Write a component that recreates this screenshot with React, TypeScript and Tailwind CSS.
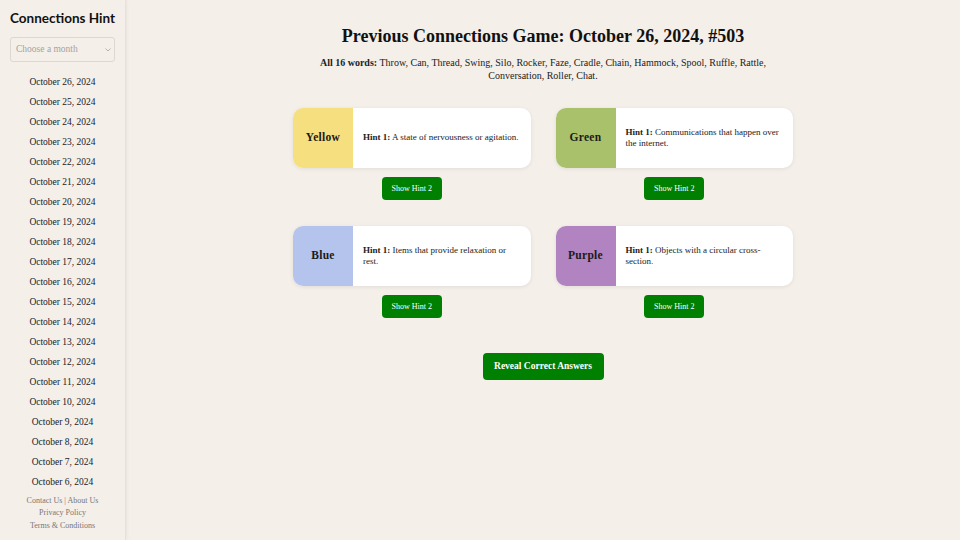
import React from 'react';

const dates = [
  'October 26, 2024', 'October 25, 2024', 'October 24, 2024', 'October 23, 2024',
  'October 22, 2024', 'October 21, 2024', 'October 20, 2024', 'October 19, 2024',
  'October 18, 2024', 'October 17, 2024', 'October 16, 2024', 'October 15, 2024',
  'October 14, 2024', 'October 13, 2024', 'October 12, 2024', 'October 11, 2024',
  'October 10, 2024', 'October 9, 2024', 'October 8, 2024', 'October 7, 2024',
  'October 6, 2024',
];

const groups = [
  { name: 'Yellow', bg: 'bg-[#f5df7e]', hint: 'A state of nervousness or agitation.' },
  { name: 'Green', bg: 'bg-[#a9c16a]', hint: 'Communications that happen over the internet.' },
  { name: 'Blue', bg: 'bg-[#b4c4ed]', hint: 'Items that provide relaxation or rest.' },
  { name: 'Purple', bg: 'bg-[#b183c1]', hint: 'Objects with a circular cross-section.' },
];

export default function App() {
  return (
    <div className="flex h-[540px] bg-[#f4efe9] text-[#1a1a1a] overflow-hidden" style={{ fontFamily: '"Liberation Serif", serif' }}>
      {/* Sidebar */}
      <aside className="w-[126px] shrink-0 border-r border-[#e6e1da] shadow-[1px_0_3px_rgba(0,0,0,0.05)] flex flex-col items-center px-[10px]">
        <h2 className="mt-[8px] whitespace-nowrap text-[13.5px] leading-[20px] font-bold text-[#111]" style={{ fontFamily: 'Lato, sans-serif' }}>
          Connections Hint
        </h2>
        <div className="mt-[9px] w-full h-[25px] shrink-0 border border-[#dcd7d0] rounded-[3px] bg-[#f4efe9] flex items-center justify-between pl-[5px] pr-[3px] text-[9.5px] text-[#a3a3a3]">
          <span>Choose a month</span>
          <svg width="6" height="4" viewBox="0 0 6 4" fill="none" stroke="#aaa" strokeWidth="0.9">
            <path d="M0.5 0.5 L3 3 L5.5 0.5" />
          </svg>
        </div>
        <ul className="mt-[12px] w-full flex flex-col items-center">
          {dates.map((d) => (
            <li key={d} className="h-[20px] leading-[16px] text-[9.5px] text-[#222] whitespace-nowrap">{d}</li>
          ))}
        </ul>
        <div className="mt-[1px] flex flex-col items-center text-[8px] leading-[12.3px] text-[#777] whitespace-nowrap">
          <span>Contact Us | About Us</span>
          <span>Privacy Policy</span>
          <span>Terms &amp; Conditions</span>
        </div>
      </aside>

      {/* Main */}
      <main className="flex-1 flex flex-col items-center pt-[25px]">
        <h1 className="text-[18px] font-bold leading-[22px] text-[#111]">
          Previous Connections Game: October 26, 2024, #503
        </h1>
        <p className="mt-[10px] w-[458px] text-center text-[10px] leading-[12.5px] text-[#222]">
          <b>All 16 words:</b> Throw, Can, Thread, Swing, Silo, Rocker, Faze, Cradle, Chain, Hammock, Spool, Ruffle, Rattle, Conversation, Roller, Chat.
        </p>

        <div className="mt-[26px] w-[500px] grid grid-cols-2 gap-x-[25px] gap-y-[26px]">
          {groups.map((g) => (
            <div key={g.name} className="flex flex-col items-center">
              <div className="w-full h-[60px] flex bg-white rounded-[10px] overflow-hidden shadow-[0_1px_4px_rgba(0,0,0,0.08)]">
                <div className={`w-[60px] shrink-0 flex items-center justify-center font-bold text-[11.5px] tracking-[0.3px] ${g.bg}`}>
                  {g.name}
                </div>
                <div className="flex-1 flex items-center px-[10px] text-[9px] leading-[11.5px] text-[#222]">
                  <p><b>Hint 1:</b> {g.hint}</p>
                </div>
              </div>
              <button className="mt-[9px] w-[60px] h-[23px] rounded-[4px] bg-[#008000] text-white text-[8px]">
                Show Hint 2
              </button>
            </div>
          ))}
        </div>

        <button className="mt-[35px] w-[121px] h-[27px] rounded-[4px] bg-[#008000] text-white text-[9.5px] font-bold">
          Reveal Correct Answers
        </button>
      </main>
    </div>
  );
}
